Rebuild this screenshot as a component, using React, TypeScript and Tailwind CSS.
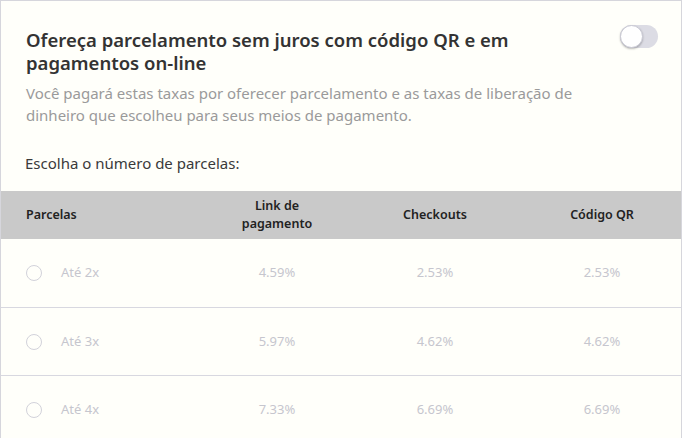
const rows = [
  { label: "Até 2x", link: "4.59%", checkout: "2.53%", qr: "2.53%" },
  { label: "Até 3x", link: "5.97%", checkout: "4.62%", qr: "4.62%" },
  { label: "Até 4x", link: "7.33%", checkout: "6.69%", qr: "6.69%" },
];

// Cartão de parcelamento sem juros, com tabela de taxas desabilitada.
export default function App() {
  return (
    <div className="h-[438px] w-[682px] overflow-hidden bg-white font-['Noto_Sans','Open_Sans',sans-serif]">
      <section className="h-[460px] border border-[#d6d6dc] bg-[#fffffa]">
        <div className="flex items-start justify-between pl-[25px] pr-[23px] pt-[24px]">
          <h2 className="mt-[3px] max-w-[520px] text-[18.5px] font-semibold leading-[23px] text-[#333333]">
            Ofereça parcelamento sem juros com código QR e em pagamentos on-line
          </h2>
          {/* toggle desligado */}
          <div className="relative h-[23px] w-[38px] rounded-full bg-[#dcdce4]">
            <span className="absolute left-0 top-0 h-[23px] w-[23px] rounded-full border border-[#c9c9d4] bg-white shadow-[0_1px_2px_rgba(0,0,0,0.25)]" />
          </div>
        </div>

        <p className="mt-[8px] max-w-[605px] pl-[25px] text-[15px] leading-[22px] text-[#9a9a9a]">
          Você pagará estas taxas por oferecer parcelamento e as taxas de liberação de dinheiro que escolheu para seus meios de pagamento.
        </p>

        <p className="mt-[27px] pl-[24px] text-[15px] leading-[20px] text-[#3a3a3a]">
          Escolha o número de parcelas:
        </p>

        <div className="mt-[18px]">
          <div className="grid h-[48px] grid-cols-[206px_140px_176px_1fr] items-center bg-[#c9c9c9] text-[12.5px] font-semibold leading-[18px] text-[#222222]">
            <span className="pl-[25px]">Parcelas</span>
            <span className="text-center">Link de<br />pagamento</span>
            <span className="text-center">Checkouts</span>
            <span className="text-center">Código QR</span>
          </div>

          {rows.map((r, i) => (
            <div
              key={r.label}
              className={`grid h-[68px] grid-cols-[206px_140px_176px_1fr] items-center text-[13px] text-[#c6c6ce] ${i > 0 ? "border-t border-[#d8d8e0]" : ""}`}
            >
              <div className="flex items-center pl-[25px]">
                <span className="h-[16px] w-[16px] rounded-full border border-[#d2d2da]" />
                <span className="ml-[19px]">{r.label}</span>
              </div>
              <span className="text-center">{r.link}</span>
              <span className="text-center">{r.checkout}</span>
              <span className="text-center">{r.qr}</span>
            </div>
          ))}
        </div>
      </section>
    </div>
  );
}
